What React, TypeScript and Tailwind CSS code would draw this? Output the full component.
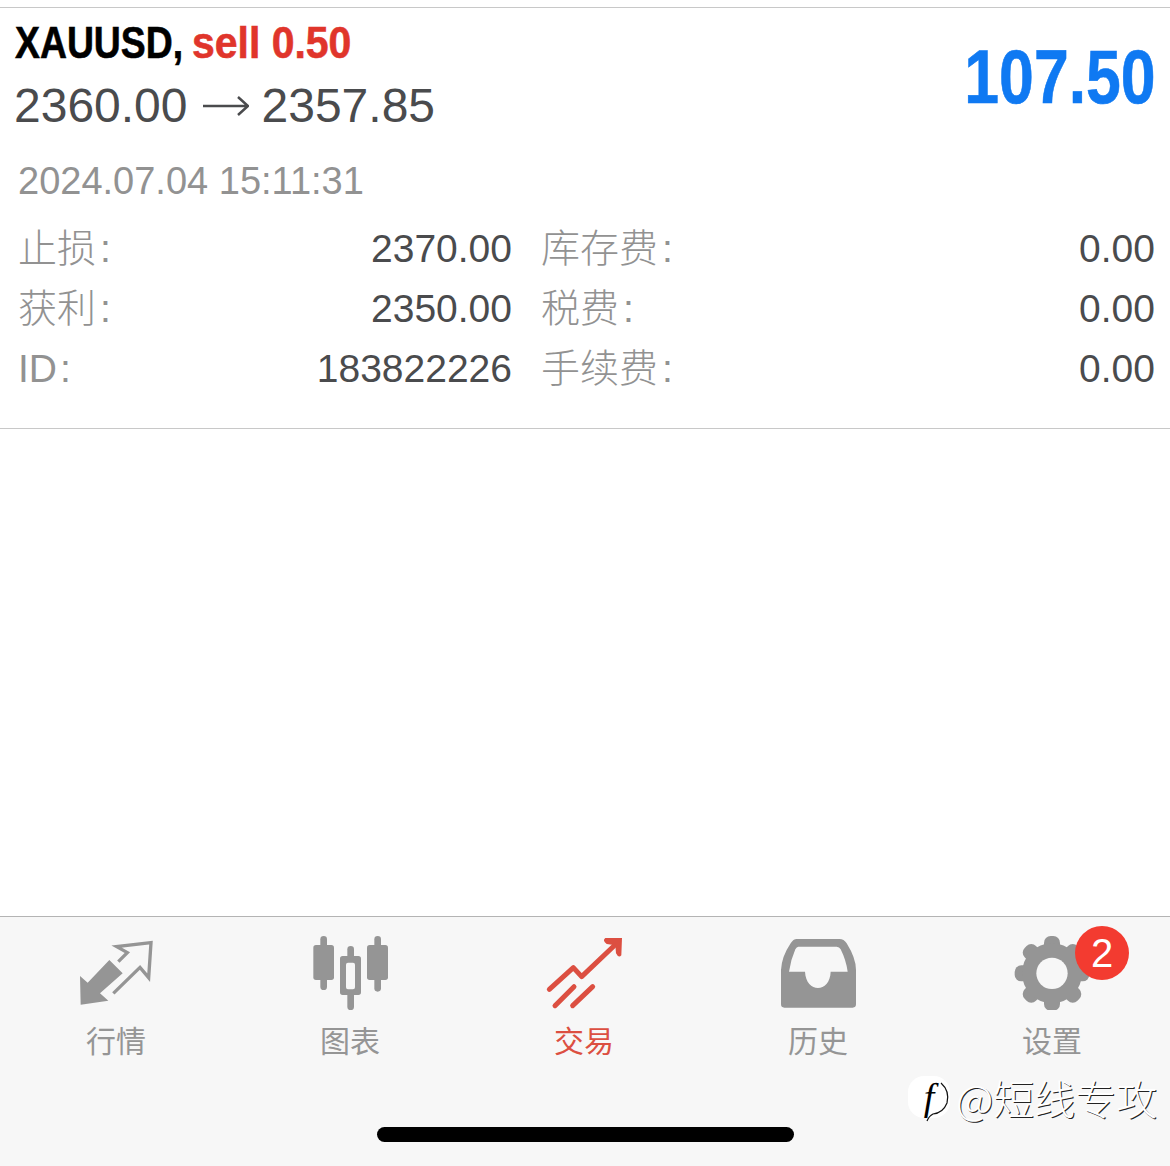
const sans = "font-['Liberation_Sans','Noto_Sans_CJK_SC',sans-serif]"

const gearAngles = [0, 45, 90, 135, 180, 225, 270, 315]

function MarketIcon() {
    return (
        <svg className="w-[80px] h-[76px]" viewBox="78 72 240 228">
            <path d="M90 198 L113 218 L178 150 L218 190 L150 250 L175 272 L92 284 Z" fill="#959595" />
            <path d="M205 155 L232 128 L200 110 L303 98 L296 203 L270 172 L190 250" fill="none" stroke="#959595" strokeWidth="10" />
        </svg>
    )
}

function ChartIcon() {
    return (
        <svg className="w-[80px] h-[76px]" viewBox="780 72 240 228" fill="#959595">
            <rect x="811" y="78" width="20" height="162" rx="10" />
            <rect x="790" y="105" width="62" height="105" rx="8" />
            <rect x="892" y="108" width="20" height="40" rx="10" />
            <rect x="892" y="245" width="20" height="55" rx="10" />
            <path fillRule="evenodd" d="M878 138 H925 Q933 138 933 146 V247 Q933 255 925 255 H878 Q870 255 870 247 V146 Q870 138 878 138 Z M894 158 Q888 158 888 164 V232 Q888 238 894 238 H909 Q915 238 915 232 V164 Q915 158 909 158 Z" />
            <rect x="973" y="78" width="20" height="167" rx="10" />
            <rect x="951" y="105" width="63" height="105" rx="8" />
        </svg>
    )
}

function TradeIcon() {
    return (
        <svg className="w-[80px] h-[76px]" viewBox="72 72 240 228">
            <path d="M88 238 L160 173 L185 200 L288 102" fill="none" stroke="#dc4f41" strokeWidth="15" strokeLinecap="round" strokeLinejoin="round" />
            <path d="M256 84 L306 84 L304 136 Q296 146 288 130 L286 106 L260 102 Q246 92 256 84 Z" fill="#dc4f41" />
            <path d="M105 287 L162 230 M158 287 L218 230" fill="none" stroke="#dc4f41" strokeWidth="15" strokeLinecap="round" />
        </svg>
    )
}

function HistoryIcon() {
    return (
        <svg className="w-[80px] h-[76px]" viewBox="774 72 240 228">
            <path fill="#959595" fillRule="evenodd" d="M830 87 H958 Q972 87 980 100 Q1008 145 1008 180 V283 Q1008 293 998 293 H793 Q783 293 783 283 V180 Q785 140 812 100 Q820 87 830 87 Z M835 110 Q830 110 826 118 Q812 150 807 185 H855 C858 250 930 250 932 185 H983 Q978 150 962 118 Q958 110 950 110 Z" />
        </svg>
    )
}

function SettingsIcon() {
    return (
        <svg className="w-[80px] h-[76px]" viewBox="366 42 240 228">
            <g transform="translate(486 160)">
                {gearAngles.map((a) => (
                    <rect key={a} x="-24" y="-112" width="48" height="60" rx="20" fill="#959595" transform={`rotate(${a})`} />
                ))}
                <circle r="90" fill="#959595" />
                <circle r="47" fill="#f7f7f7" />
            </g>
        </svg>
    )
}

function Tab({ icon, label, active, badge }: { icon: React.ReactNode; label: string; active?: boolean; badge?: string }) {
    return (
        <div className="relative flex flex-col items-center pr-[2px]">
            {icon}
            <div className={`mt-[9px] text-[30px] leading-[40px] font-['Noto_Sans_CJK_SC',sans-serif] ${active ? "text-[#dc4f41]" : "text-[#959595]"}`}>{label}</div>
            {badge ? (
                <div className={`absolute top-[-8px] left-[139px] w-[54px] h-[54px] rounded-full bg-[#f33b30] text-white flex items-center justify-center text-[40px] ${sans}`}>{badge}</div>
            ) : null}
        </div>
    )
}

function Row({ label, value, label2, value2 }: { label: string; value: string; label2: string; value2: string }) {
    return (
        <div className="flex h-[60px] items-center">
            <div className="w-[190px] pl-[18px] text-[#929292] font-light">
                {label}<span className={label === "ID" ? "ml-[3px]" : "ml-[4px]"}>:</span>
            </div>
            <div className="w-[322px] text-right text-[#4a4b4d]">{value}</div>
            <div className="w-[180px] ml-[29px] text-[#929292] font-light">
                {label2}<span className="ml-[4px]">:</span>
            </div>
            <div className="w-[434px] text-right text-[#4a4b4d]">{value2}</div>
        </div>
    )
}

export default function App() {
    return (
        <div className={`relative w-[1170px] h-[1166px] bg-white flex flex-col overflow-hidden ${sans}`}>
            <div className="h-[7px]"></div>
            <div className="flex-1 border-t border-[#c8c8c8]">
                <div className="h-[421px] border-b border-[#c8c8c8]">
                    <div className="flex justify-between">
                        <div className="pl-[15px]">
                            <div className="h-[66px] flex items-center pt-[3px] text-[45px] font-bold whitespace-nowrap [-webkit-text-stroke:0.6px]">
                                <span className="inline-block w-[177px] origin-left scale-x-[0.83] text-black">XAUUSD,</span>
                                <span className="inline-block origin-left scale-x-[0.91] text-[#e0352b]">sell 0.50</span>
                            </div>
                            <div className="h-[64px] flex items-center text-[48px] text-[#4a4b4d]">
                                <span className="-ml-px">2360.00</span>
                                <svg className="w-[46px] h-[24px] ml-[15px] mr-[13px]" viewBox="0 0 46 24" fill="none" stroke="#4a4b4d" strokeWidth="2.5">
                                    <path d="M0 12 H44 M35 3 L45 12 L35 21" />
                                </svg>
                                <span>2357.85</span>
                            </div>
                        </div>
                        <div className="pr-[18px] pt-[26px] text-[76px] leading-[86px] font-bold text-[#0f79f2] origin-right scale-x-[0.823] [-webkit-text-stroke:0.6px]">107.50</div>
                    </div>
                    <div className="pl-[18px] mt-[20px] h-[46px] flex items-center text-[38px] text-[#929292]">2024.07.04 15:11:31</div>
                    <div className="mt-[15px] text-[39px]">
                        <Row label="止损" value="2370.00" label2="库存费" value2="0.00" />
                        <Row label="获利" value="2350.00" label2="税费" value2="0.00" />
                        <Row label="ID" value="183822226" label2="手续费" value2="0.00" />
                    </div>
                </div>
            </div>
            <div className="h-[250px] bg-[#f7f7f7] border-t border-[#b4b4b4] pt-[17px] relative">
                <div className="grid grid-cols-5 w-[1170px]">
                    <Tab icon={<MarketIcon />} label="行情" />
                    <Tab icon={<ChartIcon />} label="图表" />
                    <Tab icon={<TradeIcon />} label="交易" active />
                    <Tab icon={<HistoryIcon />} label="历史" />
                    <Tab icon={<SettingsIcon />} label="设置" badge="2" />
                </div>
                <div className="absolute left-[377px] top-[210px] w-[417px] h-[15px] rounded-full bg-black"></div>
                {/* watermark */}
                <div className="absolute left-[908px] top-[156px] flex items-center">
                    <div className="relative w-[42px] h-[42px] rounded-[16px] bg-white flex items-center justify-center text-[38px] italic leading-none text-black font-['Liberation_Serif',serif]">
                        f
                        <svg className="absolute left-0 top-0 w-[48px] h-[50px] overflow-visible" viewBox="0 0 48 50" fill="none" stroke="#111" strokeWidth="1.2">
                            <path d="M33 7 Q42 15 39 27 Q35 37 25 38 Q21 40 19 45" />
                        </svg>
                    </div>
                    <div className="ml-[6px] text-[41px] leading-[48px] font-light text-white font-['Noto_Sans_CJK_SC',sans-serif] [text-shadow:1px_1px_0_#222]">@短线专攻</div>
                </div>
            </div>
        </div>
    )
}
